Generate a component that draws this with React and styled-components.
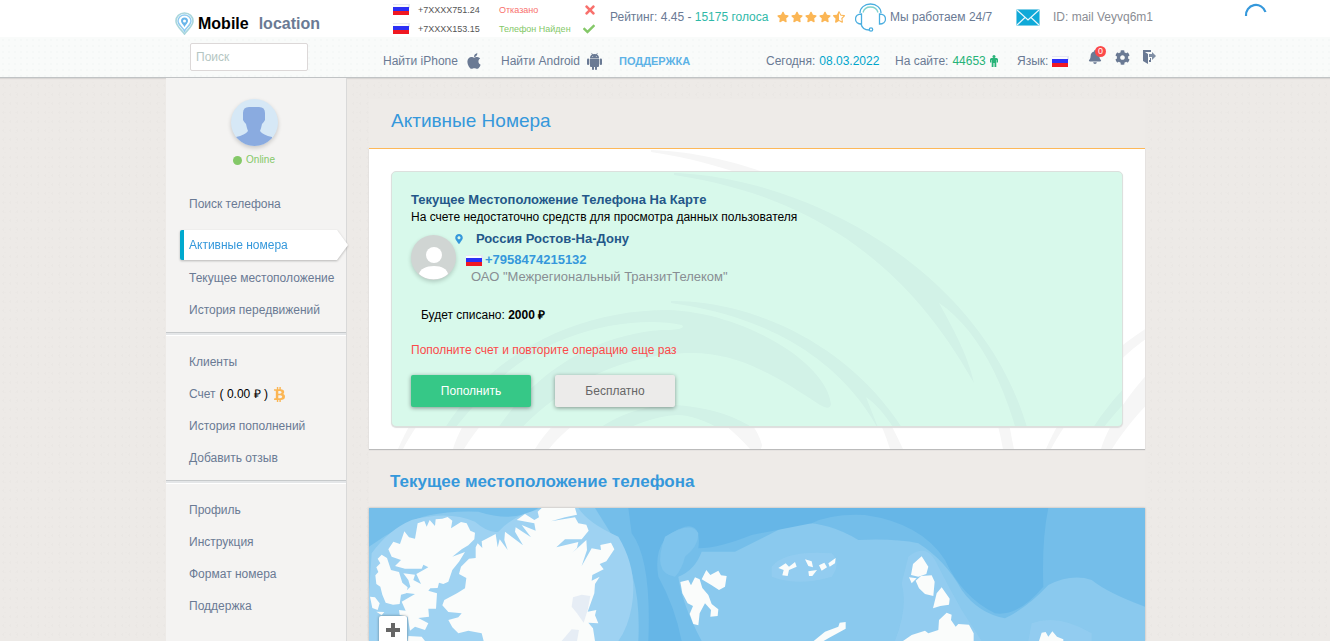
import { useId } from 'react'
import styled, { createGlobalStyle } from 'styled-components'
import {
    FaApple,
    FaBell,
    FaBtc,
    FaCheck,
    FaCog,
    FaMapMarkerAlt,
    FaStar,
    FaStarHalfAlt,
    FaTimes
} from 'react-icons/fa'

const GlobalStyle = createGlobalStyle`
    * {
        box-sizing: border-box;
    }
    body {
        margin: 0;
        font: 12px/16px "Liberation Sans", Arial, sans-serif;
        color: #6a7a94;
        background-color: #edeae7;
        background-image:
            radial-gradient(#eae7e4 1px, transparent 1px),
            radial-gradient(#ebe8e5 1px, transparent 1px);
        background-size: 7px 9px, 11px 5px;
    }
    a {
        color: inherit;
        text-decoration: none;
    }
    p, h1, h2, h3, ul {
        margin: 0;
        padding: 0;
    }
    button, input {
        font: inherit;
    }
`

const Page = styled.div`
    display: flex;
    flex-direction: column;
    min-height: 100vh;
`

const Container = styled.div`
    width: 100%;
    max-width: 998px;
    margin: 0 auto;
`

/* ---------- header ---------- */

const TopBar = styled.header`
    background: #fff;
`

const TopRow = styled(Container)`
    display: grid;
    grid-template-columns: 227px 217px 167px 78px 161px 1fr;
    align-items: center;
    height: 37px;
    white-space: nowrap;
    > :nth-child(n + 3) {
        margin-bottom: 4px;
    }
`

const Logo = styled.a`
    display: flex;
    align-items: center;
    padding: 9px 0 0 9px;
    font-size: 16px;
    font-weight: bold;
    b {
        margin: 0 10px 0 4px;
        color: #000;
    }
`

const PhoneLog = styled.ul`
    list-style: none;
    li {
        display: grid;
        grid-template-columns: 25px 81px 84px 1fr;
        align-items: center;
        height: 19px;
        font-size: 9px;
        color: #555;
    }
`

const Status = styled.span`
    color: ${({ $ok }) => ($ok ? '#84c868' : '#f8706c')};
`

const Mark = styled.span`
    display: flex;
    color: ${({ $ok }) => ($ok ? '#84c868' : '#f8706c')};
`

const Accent = styled.span`
    color: ${({ $color }) => $color};
`

const Stars = styled.span`
    display: flex;
    gap: 2px;
    color: #fbb655;
`

const Inline = styled.span`
    display: flex;
    align-items: center;
    gap: ${({ $gap }) => $gap || 4}px;
`

const MailLink = styled.a`
    display: flex;
    align-items: center;
    gap: 13px;
    color: #8a8d94;
`

const SubBar = styled.div`
    background-color: #f9fbfa;
    background-image: radial-gradient(#f5f8f7 1px, transparent 1px);
    background-size: 6px 6px;
    border-bottom: 1px solid #c0c3c5;
    box-shadow: 0 1px 1px #d9d7d5;
`

const SubRow = styled(Container)`
    display: grid;
    grid-template-columns: 217px 118px 118px 147px 129px 122px 71px 1fr;
    align-items: center;
    height: 40px;
    white-space: nowrap;
`

const Search = styled.input`
    width: 118px;
    height: 28px;
    margin-left: 24px;
    padding: 0 5px;
    border: 1px solid #dcd8d8;
    border-radius: 2px;
    background: #fff;
    color: #6a7a94;
    &::placeholder {
        color: #b4c6c2;
        opacity: 1;
    }
`

const NavLink = styled.a`
    display: flex;
    align-items: center;
    gap: 7px;
    height: 20px;
    margin-top: 8px;
`

const SupportLink = styled(NavLink)`
    color: #5db2e6;
    font-size: 11px;
    font-weight: bold;
`

const NavText = styled.span`
    display: flex;
    align-items: center;
    gap: 4px;
    height: 20px;
    margin-top: 8px;
`

const Tools = styled.div`
    display: flex;
    align-items: center;
    gap: 13px;
`

const ToolButton = styled.button`
    position: relative;
    display: flex;
    padding: 0;
    border: 0;
    background: none;
    color: #6a7a94;
    cursor: pointer;
`

const Badge = styled.span`
    position: absolute;
    top: -4px;
    right: -4px;
    width: 11px;
    height: 11px;
    border-radius: 50%;
    background: #fb4a4a;
    color: #fff;
    font-size: 9px;
    line-height: 11px;
    text-align: center;
`

const Spinner = styled.div`
    position: fixed;
    top: 3px;
    right: 62px;
    width: 24px;
    height: 24px;
`

/* ---------- body ---------- */

const Body = styled(Container)`
    display: flex;
    flex: 1;
    align-items: stretch;
    gap: 22px;
    padding-right: 19px;
`

const Sidebar = styled.aside`
    flex: 0 0 181px;
    padding-top: 21px;
    background: #f4f3f2;
    border-right: 1px solid #d9d9d9;
`

const Profile = styled.div`
    display: flex;
    flex-direction: column;
    align-items: center;
    gap: 7px;
    padding: 0 4px 21px 0;
    color: #84c868;
    font-size: 10px;
    line-height: 14px;
`

const AvatarCircle = styled.span`
    flex: none;
    width: ${({ $size }) => $size}px;
    height: ${({ $size }) => $size}px;
    border-radius: 50%;
    overflow: hidden;
    background: ${({ $color }) => $color};
    box-shadow: 0 2px 4px rgba(0, 0, 0, 0.18);
    svg {
        display: block;
    }
`

const Dot = styled.span`
    width: 9px;
    height: 9px;
    border-radius: 50%;
    background: #84c868;
`

const Menu = styled.ul`
    list-style: none;
    padding: ${({ $first }) => ($first ? '0 0 6px' : '13px 0 6px')};
    & + & {
        border-top: 1px solid #c6c9cb;
        box-shadow: inset 0 2px #e4e6e8, inset 0 3px #fff;
    }
`

const MenuItem = styled.li`
    margin-bottom: ${({ $gap }) => ($gap ? 10 : 0)}px;
    a {
        display: flex;
        align-items: center;
        gap: 4px;
        height: 32px;
        padding-left: 23px;
        white-space: nowrap;
    }
    b {
        color: #000;
        font-weight: normal;
    }
`

const ActiveItem = styled(MenuItem)`
    height: 32px;
    margin-right: -2px;
    filter: drop-shadow(0 1px 1px rgba(0, 0, 0, 0.25));
    a {
        height: 30px;
        margin-left: 14px;
        padding-left: 5px;
        border-left: 4px solid #00a9ce;
        border-radius: 2px 0 0 2px;
        background: #fff;
        color: #3598db;
        clip-path: polygon(0 0, calc(100% - 11px) 0, 100% 50%, calc(100% - 11px) 100%, 0 100%);
    }
`

const Main = styled.main`
    display: flex;
    flex: 1;
    flex-direction: column;
    min-width: 0;
    padding-top: 21px;
`

const Title = styled.h1`
    height: 49px;
    padding-left: 22px;
    background: #eeebe8;
    color: #3598db;
    font-size: 19px;
    font-weight: normal;
    line-height: 44px;
`

const MapTitle = styled.h2`
    height: 59px;
    padding: 6px 0 0 21px;
    background: #eeebe8;
    color: #3598db;
    font-size: 17px;
    font-weight: bold;
    line-height: 53px;
`

const Panel = styled.section`
    position: relative;
    padding: 22px;
    border-top: 1px solid #fdb859;
    background: #fff;
    box-shadow: 0 1px 1px #bbb;
`

const Backdrop = styled.svg`
    position: absolute;
    inset: 0;
    width: 100%;
    height: 100%;
`

const Card = styled.div`
    position: relative;
    overflow: hidden;
    padding: 19px 19px 19px;
    border: 1px solid #dce0dd;
    border-radius: 5px;
    background: #d8f9eb;
    color: #000;
    box-shadow: 0 1px 1px #ddd;
`

const CardContent = styled.div`
    position: relative;
`

const CardTitle = styled.h3`
    color: #235789;
    font-size: 13px;
    font-weight: bold;
    line-height: 18px;
`

const Person = styled.div`
    display: flex;
    gap: 10px;
    margin-top: 6px;
    ${AvatarCircle} {
        margin-top: 4px;
    }
`

const PersonInfo = styled.div`
    display: flex;
    flex-direction: column;
    gap: 1px;
`

const City = styled(CardTitle)`
    display: flex;
    align-items: center;
    gap: 12px;
    margin: 0 0 4px -12px;
    line-height: 16px;
    svg {
        color: #3598db;
    }
`

const PhoneNumber = styled.a`
    display: flex;
    align-items: center;
    gap: 2px;
    color: #3598db;
    font-size: 13px;
    font-weight: bold;
`

const Operator = styled.p`
    padding-left: 5px;
    color: #888e93;
    font-size: 13px;
`

const Cost = styled.p`
    margin-top: 22px;
    padding-left: 10px;
`

const Warning = styled.p`
    margin-top: 19px;
    color: #fb4a4a;
`

const Actions = styled.div`
    display: flex;
    gap: 24px;
    margin-top: 17px;
`

const ActionButton = styled.button`
    width: 120px;
    height: 32px;
    padding: 0;
    border: 0;
    border-radius: 2px;
    background: ${({ $primary }) => ($primary ? '#36c887' : '#ecebea')};
    color: ${({ $primary }) => ($primary ? '#fff' : '#666')};
    box-shadow: 0 1px 4px rgba(0, 0, 0, 0.4);
    cursor: pointer;
`

const MapArea = styled.section`
    position: relative;
    flex: 1;
    min-height: 133px;
    overflow: hidden;
    background: #8ecbf0;
    box-shadow: 0 0 2px #aaa;
`

const ZoomButton = styled.button`
    position: absolute;
    top: 108px;
    left: 10px;
    width: 28px;
    height: 28px;
    padding: 0;
    border: 0;
    border-radius: 2px;
    background: #fff;
    box-shadow: 0 0 3px rgba(0, 0, 0, 0.4);
    svg {
        display: block;
    }
`

/* ---------- drawings ---------- */

function Flag() {
    return (
        <svg width="17" height="11" viewBox="0 0 17 11" role="img" aria-label="RU">
            <rect width="17" height="4" fill="#e6e9f1" />
            <rect y="1" width="15" height="3" fill="#fbfbfd" />
            <rect y="3" width="16" height="5" fill="#2b2ff5" />
            <rect y="7" width="16" height="4" fill="#f01822" />
        </svg>
    )
}

function PinLogo() {
    return (
        <svg width="19" height="23" viewBox="0 0 19 23" fill="none">
            <path d="M9.500 1C4.500 1 1 4.500 1 9c0 5 5 8 8.500 13C13 17 18 14 18 9c0-4.500-3.500-8-8.500-8z" stroke="#a9d6dc" strokeWidth="1.600" />
            <path d="M9.500 3C6 3 3 5.500 3 9c0 3.500 4 6 6.500 10 2.500-4 6.500-6.500 6.500-10 0-3.500-3-6-6.500-6z" stroke="#8fcaf0" strokeWidth="1.500" />
            <path d="M9.500 5.500a3.500 3.500 0 0 0-3.500 3.500c0 2 2 3 3.500 6 1.500-3 3.500-4 3.500-6a3.500 3.500 0 0 0-3.500-3.500z" fill="#68b5ea" />
            <circle cx="9.500" cy="9" r="1.500" fill="#fff" />
        </svg>
    )
}

function Headset() {
    return (
        <svg width="31" height="29" viewBox="0 0 31 29" fill="none" stroke="#4aaee0" strokeWidth="1.300">
            <path d="M5 10C5 5 9.500 1 15.500 1S26 5 26 10" />
            <path d="M8 9.500C9 6 11.500 4 15.500 4S22 6 23 9.500" stroke="#7fd3cd" />
            <path d="M6.500 11v10c-3.500 0-6-2-6-5s2.500-5 6-5zM24.500 11v10c3.500 0 6-2 6-5s-2.500-5-6-5z" />
            <path d="M6 21c1 4 4 6 8 6" />
            <circle cx="16" cy="26.500" r="1.700" />
        </svg>
    )
}

function Envelope() {
    return (
        <svg width="24" height="17" viewBox="0 0 24 17" fill="none">
            <rect x="0.500" y="0.500" width="23" height="16" rx="1" fill="#0fa9d8" stroke="#7fcfe8" />
            <path d="M1 1l11 10L23 1M1 16l8-7.500M23 16l-8-7.500" stroke="#e9f7fc" strokeWidth="1.200" />
        </svg>
    )
}

function AndroidIcon() {
    return (
        <svg width="15" height="17" viewBox="0 0 15 17" fill="currentColor">
            <path d="M3 5C3 3 4 2 5 1.500L4.300 0h.6l.8 1.300a5 5 0 0 1 3.600 0L10.100 0h.6L10 1.500C11 2 12 3 12 5zM5.300 3v.8h.8V3zM8.900 3v.8h.8V3z" fillRule="evenodd" />
            <path d="M3 5.600h9V13q0 1-1 1H10v2.200q0 .8-1 .8t-1-.8V14H7v2.200q0 .8-1 .8t-1-.8V14H4q-1 0-1-1z" />
            <rect y="5.500" width="2.300" height="6.500" rx="1.100" />
            <rect x="12.700" y="5.500" width="2.300" height="6.500" rx="1.100" />
        </svg>
    )
}

function PersonIcon() {
    return (
        <svg width="8" height="12" viewBox="0 0 8 12" fill="#27b378">
            <circle cx="4" cy="1.500" r="1.500" />
            <path d="M1.500 3h5Q8 3 8 4.500V7.500H6.700V5H6.300V12H4.500V8h-1V12H1.700V5H1.300V7.500H0V4.500Q0 3 1.500 3z" />
        </svg>
    )
}

function ExitIcon() {
    return (
        <svg width="14" height="14" viewBox="0 0 14 14" fill="currentColor">
            <path d="M0 0H8V2H2L5 4V14L0 11Z" />
            <path d="M6 10h1V8h1v4H6z" />
            <path d="M6 4h3V2l4 4-4 4V7H6z" opacity=".85" />
        </svg>
    )
}

function Swirls({ color }) {
    const id = useId()
    return (
        <Backdrop aria-hidden="true">
            <defs>
                <pattern id={id} width="648" height="600" patternUnits="userSpaceOnUse">
                    <g fill={color}>
                        <path d="M282 1C420 5 620 110 645 300H634C620 225 590 160 547 131C560 155 575 180 582 211C520 100 430 25 282 3Z" />
                        <path d="M279 129C360 128 480 175 534 300H521C512 270 495 240 474 225L487 258C450 190 380 145 279 131Z" />
                        <path d="M29 300C40 275 60 240 89 211C139 163 206 138 276 138C350 140 435 190 439 232Q438 239 428 233C390 208 350 181 300 181C230 181 150 215 95 300H84C105 240 170 165 270 158Q295 158 290 153C240 142 150 160 100 215C65 250 48 275 34 300Z" />
                        <path d="M166 300C190 262 230 233 282 233C340 236 385 262 393 296Q393 304 381 300C350 265 310 243 285 243C240 246 200 275 180 300Z" />
                    </g>
                </pattern>
            </defs>
            <rect width="100%" height="100%" fill={`url(#${id})`} />
        </Backdrop>
    )
}

function WorldMap() {
    return (
        <Backdrop viewBox="12 144 2328 399" preserveAspectRatio="xMinYMin slice" aria-hidden="true">
            <rect x="12" y="144" width="2328" height="1200" fill="#8ac9ee" />
            <g fill="#74beea">
                <path d="M12 144H520Q450 190 340 155Q180 150 110 200Q60 225 12 260Z" />
                <path d="M690 144H2340V440Q2230 400 2180 360Q2120 340 2050 375Q1990 440 1920 475Q1840 460 1790 390Q1740 300 1660 250Q1590 235 1480 240Q1380 180 1280 190Q1180 240 1110 275H1010Q990 330 940 350Q950 430 1010 543H820Q830 340 750 240Z" />
            </g>
            <path d="M790 144H2050Q2030 240 2035 380Q1960 470 1890 460Q1790 410 1740 300Q1670 190 1500 165Q1400 160 1340 190L1160 225Q1060 265 1000 265Q1010 190 960 200Q860 230 880 350Q930 440 950 543H850Q860 300 800 220Z" fill="#66b6e7" />
            <path d="M900 230Q980 180 1000 220Q1000 260 960 290Q950 330 930 350Q860 340 900 230Z" fill="#7fc4ed" />
            <g fill="#9ed2f2">
                <path d="M20 280Q70 210 140 180Q250 150 330 185Q370 220 400 215Q450 160 540 144H640Q670 190 760 230Q820 330 800 440Q790 500 760 543H12V400Z" />
                <path d="M1220 320Q1260 270 1400 280Q1430 310 1400 350Q1300 380 1220 350ZM1630 290Q1680 250 1710 300Q1750 380 1790 450L1850 543H1590Q1630 440 1610 370ZM2000 490Q2080 460 2180 520V543H1990Z" opacity=".4" />
            </g>
            <g fill="#fafcfb">
                <path d="M70 268L85 245L105 252L118 214L132 232L150 236L158 190L178 183L185 200L194 180L210 198L212 178L232 176L248 171L262 182L258 205L288 186L305 190L316 212L330 218L328 238L310 256L290 268L262 290L300 276L282 305L262 330L250 365L235 372L222 368L218 384L196 385L190 392L216 400L213 446L190 446L192 470L160 474L190 490L180 510L150 500L135 512L128 470L104 465L102 450L122 452L110 425L150 402L118 398L136 380L130 360L115 340L150 344L145 360L168 372L154 342L190 322L175 314L170 326L120 326L90 318L108 300L80 290Z" />
                <path d="M50 284L66 294L78 330L102 336L112 368L128 382L124 400L108 404L104 432L84 434L62 428L52 404L46 380L34 372L31 346L40 336L34 322L46 310L38 296Z" />
                <path d="M15 410L30 412L44 430L38 450L22 444ZM34 455L58 456L50 466ZM130 528L170 530L180 543H128Z" />
                <path d="M332 262L338 250L352 264L350 244L392 222L398 262L404 238L428 270L418 240L420 215L474 256L450 215L452 202L498 232L470 195L512 212L508 190L455 180L480 162L508 180L522 172L518 155L530 144H630L636 164L600 172L558 184L630 172L640 190L664 194L671 212L650 238L600 238L574 262L640 246L636 264L622 278L664 240L666 270L650 318L680 265L708 270L706 255L738 248L748 268L724 304L704 312L716 328L682 345L680 362L704 350L690 372L688 400L668 455L694 450L690 466L700 490L670 488L684 505L690 543H356L350 520L310 512L280 520L262 502L250 480L280 472L290 460L250 456L232 436L238 420L276 400L300 385L304 354L282 342L288 320L312 296L332 294Z" />
                <path d="M946 366L970 360L978 376L990 352L1004 358L1012 384L1030 405L1040 432L1060 448L1058 468L1036 470L1038 450L1020 430L1004 460L1000 496L985 492L974 462L984 438L968 430L952 400ZM1010 358L1024 330L1036 345L1060 332L1068 346L1085 348L1080 380L1062 390L1040 376Z" />
                <path d="M1240 324L1262 310L1272 320L1290 306L1295 320L1272 330L1268 348L1252 346L1256 330ZM1320 298L1340 304L1344 322L1330 318ZM1330 334L1356 330L1342 348H1332ZM1362 316L1378 308L1386 322L1370 332ZM1390 310L1412 294L1410 310L1394 320Z" />
                <path d="M1638 345L1644 312L1670 289L1690 320L1684 342L1660 350ZM1632 352L1655 355L1640 370ZM1652 362L1668 348L1700 346L1709 365L1705 408L1680 402L1662 385ZM1704 445L1715 400L1730 382L1754 416L1752 434L1726 438ZM1346 543L1380 515L1420 500L1424 488L1442 486L1442 506L1390 535L1376 543ZM1614 543L1640 525L1680 512L1690 520L1720 510L1722 480L1745 458L1760 464L1758 480L1772 500L1780 492L1812 494L1826 520L1826 543ZM2022 543L2030 518L2042 516L2050 530L2062 514L2076 530L2095 538V543Z" />
            </g>
            <path d="M624 412L650 404L676 408L668 450L656 488L636 460L620 440ZM590 543L620 508L642 510L636 543Z" fill="#e6edf5" />
        </Backdrop>
    )
}

const phones = [
    { number: '+7XXXX751.24', status: 'Отказано', ok: false },
    { number: '+7XXXX153.15', status: 'Телефон Найден', ok: true }
]

function Header() {
    return (
        <>
            <TopBar>
                <TopRow>
                    <Logo href="#">
                        <PinLogo />
                        <b>Mobile</b> location
                    </Logo>
                    <PhoneLog>
                        {phones.map(({ number, status, ok }) => (
                            <li key={number}>
                                <Flag />
                                <span>{number}</span>
                                <Status $ok={ok}>{status}</Status>
                                <Mark $ok={ok}>{ok ? <FaCheck size={12} /> : <FaTimes size={14} />}</Mark>
                            </li>
                        ))}
                    </PhoneLog>
                    <span>
                        Рейтинг: 4.45 - <Accent $color="#2fb9a8">15175 голоса</Accent>
                    </span>
                    <Stars>
                        <FaStar size={12} />
                        <FaStar size={12} />
                        <FaStar size={12} />
                        <FaStar size={12} />
                        <FaStarHalfAlt size={12} />
                    </Stars>
                    <Inline>
                        <Headset />
                        Мы работаем 24/7
                    </Inline>
                    <MailLink href="#">
                        <Envelope />
                        ID: mail Veyvq6m1
                    </MailLink>
                </TopRow>
            </TopBar>
            <SubBar>
                <SubRow>
                    <Search type="search" placeholder="Поиск" aria-label="Поиск" />
                    <NavLink href="#">
                        Найти iPhone <FaApple size={18} />
                    </NavLink>
                    <NavLink href="#">
                        Найти Android <AndroidIcon />
                    </NavLink>
                    <SupportLink href="#">ПОДДЕРЖКА</SupportLink>
                    <NavText>
                        Сегодня: <Accent $color="#00a5cc">08.03.2022</Accent>
                    </NavText>
                    <NavText>
                        На сайте:
                        <Inline>
                            <Accent $color="#27b378">44653</Accent>
                            <PersonIcon />
                        </Inline>
                    </NavText>
                    <NavText>
                        Язык: <Flag />
                    </NavText>
                    <Tools>
                        <ToolButton aria-label="Уведомления">
                            <FaBell size={14} />
                            <Badge>0</Badge>
                        </ToolButton>
                        <ToolButton aria-label="Настройки">
                            <FaCog size={15} />
                        </ToolButton>
                        <ToolButton aria-label="Выход">
                            <ExitIcon />
                        </ToolButton>
                    </Tools>
                </SubRow>
            </SubBar>
            <Spinner>
                <svg width="24" height="24" viewBox="0 0 24 24" fill="none">
                    <path d="M2 13A10 10 0 0 1 21.500 9" stroke="#3598db" strokeWidth="2.200" />
                </svg>
            </Spinner>
        </>
    )
}

function Navigation() {
    return (
        <Sidebar>
            <Profile>
                <AvatarCircle $size={47} $color="#d6e8f6">
                    <svg width="47" height="47" viewBox="0 0 47 47">
                        <path d="M12 14Q12 8 18 8H28Q34 8 34 14V21Q33 23 31 25Q30 30 29 32Q32 36 41 38V47H5V38Q14 36 17 32Q16 30 15 25Q13 23 12 21Z" fill="#8aabe0" />
                    </svg>
                </AvatarCircle>
                <Inline>
                    <Dot />
                    Online
                </Inline>
            </Profile>
            <nav>
                <Menu $first>
                    <MenuItem $gap><a href="#">Поиск телефона</a></MenuItem>
                    <ActiveItem><a href="#">Активные номера</a></ActiveItem>
                    <MenuItem><a href="#">Текущее местоположение</a></MenuItem>
                    <MenuItem><a href="#">История передвижений</a></MenuItem>
                </Menu>
                <Menu>
                    <MenuItem><a href="#">Клиенты</a></MenuItem>
                    <MenuItem>
                        <a href="#">
                            Счет <b>( 0.00 ₽ )</b>
                            <FaBtc size={15} color="#fbb655" />
                        </a>
                    </MenuItem>
                    <MenuItem><a href="#">История пополнений</a></MenuItem>
                    <MenuItem><a href="#">Добавить отзыв</a></MenuItem>
                </Menu>
                <Menu>
                    <MenuItem><a href="#">Профиль</a></MenuItem>
                    <MenuItem><a href="#">Инструкция</a></MenuItem>
                    <MenuItem><a href="#">Формат номера</a></MenuItem>
                    <MenuItem><a href="#">Поддержка</a></MenuItem>
                </Menu>
            </nav>
        </Sidebar>
    )
}

function ActiveNumber() {
    return (
        <Panel>
            <Swirls color="#f6f6f6" />
            <Card>
                <Swirls color="#d2f2e7" />
                <CardContent>
                    <CardTitle>Текущее Местоположение Телефона На Карте</CardTitle>
                    <p>На счете недостаточно средств для просмотра данных пользователя</p>
                    <Person>
                        <AvatarCircle $size={45} $color="#d0d5d3">
                            <svg width="45" height="45" viewBox="0 0 45 45" fill="#fff">
                                <circle cx="23" cy="20" r="8" />
                                <path d="M8 39C9 34 15 31 23 31S36 34 37 39C30 46 15 46 8 39Z" />
                            </svg>
                        </AvatarCircle>
                        <PersonInfo>
                            <City>
                                <FaMapMarkerAlt size={10} />
                                Россия Ростов-На-Дону
                            </City>
                            <PhoneNumber href="tel:+7958474215132">
                                <Flag />
                                +7958474215132
                            </PhoneNumber>
                            <Operator>ОАО "Межрегиональный ТранзитТелеком"</Operator>
                        </PersonInfo>
                    </Person>
                    <Cost>
                        Будет списано: <b>2000 ₽</b>
                    </Cost>
                    <Warning>Пополните счет и повторите операцию еще раз</Warning>
                    <Actions>
                        <ActionButton $primary>Пополнить</ActionButton>
                        <ActionButton>Бесплатно</ActionButton>
                    </Actions>
                </CardContent>
            </Card>
        </Panel>
    )
}

function App() {
    return (
        <Page>
            <GlobalStyle />
            <Header />
            <Body>
                <Navigation />
                <Main>
                    <Title>Активные Номера</Title>
                    <ActiveNumber />
                    <MapTitle>Текущее местоположение телефона</MapTitle>
                    <MapArea>
                        <WorldMap />
                        <ZoomButton aria-label="Приблизить">
                            <svg width="28" height="28" viewBox="0 0 28 28">
                                <path d="M7 14H21M14 7V21" stroke="#666" strokeWidth="4" />
                            </svg>
                        </ZoomButton>
                    </MapArea>
                </Main>
            </Body>
        </Page>
    )
}

export default App
